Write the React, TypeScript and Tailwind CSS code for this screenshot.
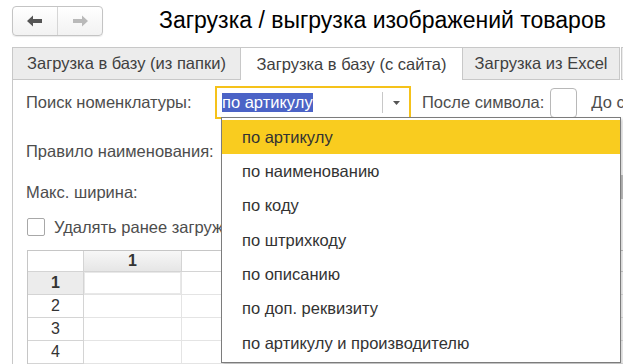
import { Fragment } from "react";

const OPTIONS = [
  "по артикулу",
  "по наименованию",
  "по коду",
  "по штрихкоду",
  "по описанию",
  "по доп. реквизиту",
  "по артикулу и производителю",
];

const COLS = 6;
const ROWS = 5;

function NavButtons() {
  return (
    <div className="flex h-[30px] w-[91px] shrink-0 rounded-[4px] border border-[#c4c4c4] bg-gradient-to-b from-white to-[#f2f2f2] shadow-[0_1px_1px_rgba(0,0,0,0.08)]">
      <div className="flex w-[45px] items-center justify-center border-r border-[#d6d6d6]">
        <svg width="16" height="12" viewBox="0 0 16 12">
          <path d="M0 6 L6 0.5 V4 H15 V8 H6 V11.5 Z" fill="#555" />
        </svg>
      </div>
      <div className="flex flex-1 items-center justify-center">
        <svg width="16" height="12" viewBox="0 0 16 12">
          <path d="M16 6 L10 0.5 V4 H1 V8 H10 V11.5 Z" fill="#b9b9b9" />
        </svg>
      </div>
    </div>
  );
}

function Tabs() {
  return (
    <div className="flex h-[33px] pl-[12px] text-[16.5px] text-[#404040]">
      <div className="flex w-[229px] shrink-0 items-center justify-center whitespace-nowrap border border-[#c8c8c8] bg-[#ececec]">
        Загрузка в базу (из папки)
      </div>
      <div className="flex w-[221px] shrink-0 items-center justify-center whitespace-nowrap border-t border-[#c8c8c8] bg-white">
        Загрузка в базу (с сайта)
      </div>
      <div className="flex w-[158px] shrink-0 items-center justify-center whitespace-nowrap border border-[#c8c8c8] bg-[#ececec]">
        Загрузка из Excel
      </div>
      <div className="ml-[1px] w-[20px] shrink-0 border border-r-0 border-[#c8c8c8] bg-[#ececec]" />
    </div>
  );
}

function Grid() {
  return (
    <div
      className="grid border-l border-t border-[#c6c6c6] text-[16px] text-[#333]"
      style={{ gridTemplateColumns: `56px repeat(${COLS}, 98px)` }}
    >
      <div className="h-[21px] border-b border-r border-[#d4d4d4] bg-white" />
      {Array.from({ length: COLS }).map((_, c) => (
        <div
          key={c}
          className={`flex h-[21px] items-center justify-center border-b border-r border-[#d4d4d4] font-bold leading-none ${
            c === 0 ? "bg-gradient-to-b from-[#f7f7f7] to-[#e6e6e6]" : "bg-white"
          }`}
        >
          {c === 0 ? "1" : ""}
        </div>
      ))}
      {Array.from({ length: ROWS }).map((_, r) => (
        <Fragment key={r}>
          <div
            className={`flex h-[23px] items-center justify-center border-b border-r border-[#d4d4d4] leading-none ${
              r === 0 ? "bg-[#ececec] font-bold" : "bg-white"
            }`}
          >
            {r + 1}
          </div>
          {Array.from({ length: COLS }).map((_, c) => (
            <div
              key={c}
              className={`h-[23px] border-b border-r border-[#e4e4e4] bg-white ${
                r === 0 && c === 0 ? "shadow-[inset_0_0_0_1px_#e8e8e8,2px_3px_0_0_#efefef]" : ""
              }`}
            />
          ))}
        </Fragment>
      ))}
    </div>
  );
}

function SearchCombo() {
  return (
    <div className="relative shrink-0">
      <div className="flex h-[33px] w-[196px] items-center border-2 border-[#f5c21a] bg-white">
        <div className="flex flex-1 items-center pl-[5px]">
          <span className="whitespace-nowrap bg-[#4b63c6] text-[16.5px] leading-[19px] text-white">по артикулу</span>
        </div>
        <div className="flex h-[21px] w-[27px] items-center justify-center border-l border-[#c8c8c8]">
          <svg width="7" height="4" viewBox="0 0 7 4">
            <path d="M0 0 H7 L3.5 4 Z" fill="#555" />
          </svg>
        </div>
      </div>

      <div className="absolute left-[6px] top-[31px] z-10 w-[400px] border border-[#7c7c7c] bg-white py-[2px] shadow-[2px_2px_3px_rgba(0,0,0,0.18)]">
        {OPTIONS.map((o, i) => (
          <div
            key={o}
            className={`flex h-[34.3px] items-center whitespace-nowrap pl-[20px] text-[16.5px] text-[#333] ${
              i === 0 ? "bg-[#f9cc1f]" : ""
            }`}
          >
            {o}
          </div>
        ))}
      </div>
    </div>
  );
}

export default function App() {
  return (
    <div
      className="relative h-[364px] w-[623px] overflow-hidden bg-white"
      style={{ fontFamily: '"Liberation Sans", Arial, sans-serif' }}
    >
      {/* Header */}
      <div className="flex h-[47px] items-start pl-[12px] pt-[6px]">
        <NavButtons />
        <h1 className="ml-[56px] mt-[1px] whitespace-nowrap text-[23px] font-normal leading-[26px] text-black">
          Загрузка / выгрузка изображений товаров
        </h1>
      </div>

      <Tabs />

      {/* Tab body */}
      <div className="ml-[12px] h-[284px] border-l border-[#c8c8c8] pl-[13px] text-[16.5px] text-[#4d4d4d]">
        <div className="flex h-[39px] items-end whitespace-nowrap">
          <div className="flex h-[33px] items-center">
            <span className="w-[189px] shrink-0">Поиск номенклатуры:</span>
            <SearchCombo />
            <span className="ml-[11px] shrink-0">После символа:</span>
            <div className="ml-[6px] h-[30px] w-[27px] shrink-0 rounded-[4px] border border-[#b8b8b8] bg-white" />
            <span className="ml-[14px] shrink-0">До символа:</span>
          </div>
        </div>

        <div className="mt-[23px] whitespace-nowrap leading-[18px]">Правило наименования:</div>
        <div className="mt-[23px] whitespace-nowrap leading-[18px]">Макс. ширина:</div>

        <div className="mt-[17px] flex h-[18px] items-center leading-[18px]">
          <div className="ml-[1px] h-[18px] w-[18px] shrink-0 rounded-[2px] border border-[#a8a8a8] bg-white" />
          <span className="ml-[9px] whitespace-nowrap">Удалять ранее загруженные изображения</span>
        </div>

        <div className="ml-[1px] mt-[14px]">
          <Grid />
        </div>
      </div>

      <div className="absolute right-0 top-[175px] h-[24px] w-[3px] bg-[#c8c8c8]" />
    </div>
  );
}
